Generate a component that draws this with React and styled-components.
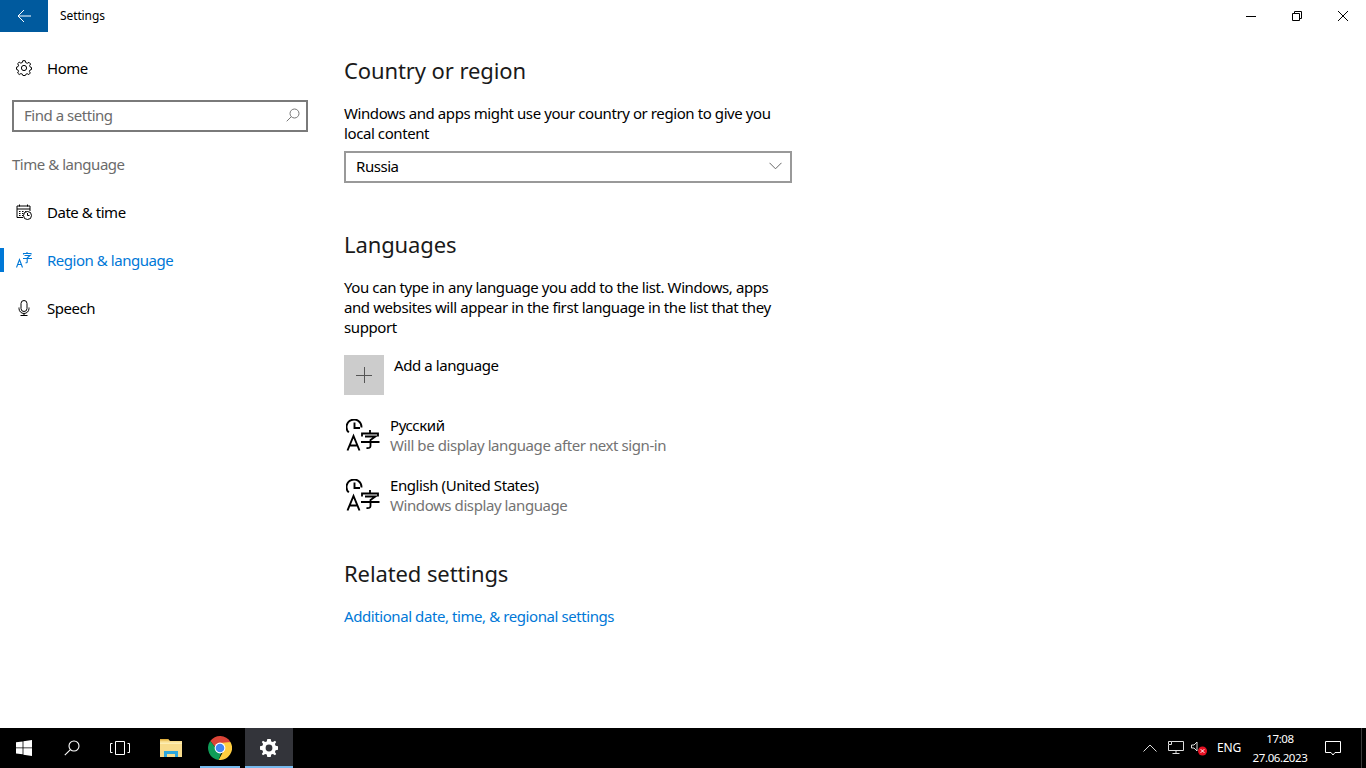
import React from "react";
import styled, { createGlobalStyle } from "styled-components";

const Global = createGlobalStyle`
  html, body { margin: 0; padding: 0; background: #fff; }
  * { box-sizing: border-box; }
  #root { width: 1366px; height: 768px; overflow: hidden; }
  body { font-family: "Noto Sans", "Open Sans", sans-serif; color: #000; }
`;

const Desktop = styled.div`
  width: 1366px; height: 768px; display: flex; flex-direction: column;
`;
const Window = styled.div`
  height: 728px; display: flex; flex-direction: column; background: #fff;
`;
const TitleBar = styled.div`
  height: 32px; display: flex; align-items: center; flex: none;
`;
const BackButton = styled.div`
  width: 48px; height: 32px; background: #005a9e; display: flex; align-items: center; justify-content: center; color: #fff;
`;
const AppTitle = styled.div`
  font-size: 12px; margin-left: 12px; flex: 1; letter-spacing: -0.1px; padding-bottom: 2px;
`;
const WinButton = styled.div`
  width: 46px; height: 32px; display: flex; align-items: center; justify-content: center;
`;
const Body = styled.div`
  flex: 1; display: flex;
`;
const Sidebar = styled.nav`
  width: 320px; flex: none; padding-top: 12px; display: flex; flex-direction: column;
`;
const NavRow = styled.div`
  position: relative; height: 48px; display: flex; align-items: center; padding-left: 16px; gap: 15px;
  font-size: 15px; letter-spacing: -0.47px; color: ${p => (p.$active ? "#0078d7" : "#000")};
  ${p => p.$active && `
    &::before { content: ""; position: absolute; left: 0; top: 12px; width: 4px; height: 24px; background: #0078d7; }
  `}
`;
const IconBox = styled.span`
  width: 16px; height: 16px; display: flex; flex: none;
`;
const SearchBox = styled.div`
  margin: 8px 12px 0; height: 32px; border: 2px solid #7a7a7a; display: flex; align-items: center; justify-content: space-between;
  padding: 0 6px 2px 10px; font-size: 15px; letter-spacing: -0.47px; color: #6b6b6b;
`;
const GroupLabel = styled.div`
  margin: 19px 0 11px 12px; height: 26px; line-height: 26px; font-size: 15px; letter-spacing: -0.47px; color: #6b6b6b;
`;
const Content = styled.main`
  flex: 1; padding: 20px 0 0 24px; display: flex; flex-direction: column; align-items: flex-start;
`;
const Heading = styled.h2`
  margin: ${p => p.$top || 0}px 0 0; font-weight: 400; font-size: 22px; line-height: 36px; letter-spacing: -0.1px; color: #1a1a1a;
`;
const Para = styled.p`
  margin: 15px 0 0; width: 448px; font-size: 15px; line-height: 20px; letter-spacing: -0.41px;
`;
const Dropdown = styled.div`
  margin-top: 8px; width: 448px; height: 32px; border: 2px solid #999; display: flex; align-items: center; justify-content: space-between;
  padding: 0 8px 2px 10px; font-size: 15px; letter-spacing: -0.45px;
`;
const AddRow = styled.div`
  margin-top: 18px; display: flex; gap: 10px; font-size: 15px; letter-spacing: -0.42px; line-height: 20px;
`;
const AddTile = styled.div`
  width: 40px; height: 40px; background: #ccc; display: flex; align-items: center; justify-content: center;
`;
const LangRow = styled.div`
  display: flex; gap: 10px; margin-top: 20px; padding-left: 2px; height: 40px; align-items: center;
`;
const LangText = styled.div`
  font-size: 15px; line-height: 20px; letter-spacing: -0.42px;
`;
const LangSub = styled.div`
  color: #737373;
`;
const Link = styled.a`
  margin-top: 15px; font-size: 15px; line-height: 20px; letter-spacing: -0.42px; color: #0078d7; text-decoration: none;
`;
const Taskbar = styled.footer`
  height: 40px; background: #000; display: flex; align-items: stretch; color: #fff; flex: none;
`;
const TaskButton = styled.div`
  position: relative; width: 48px; margin-left: ${p => p.$ml || 0}px; display: flex; align-items: center; justify-content: center;
  background: ${p => (p.$active ? "#33343a" : "transparent")};
  ${p => p.$open && `
    &::after { content: ""; position: absolute; left: ${p.$active ? 0 : 4}px; right: ${p.$active ? 0 : 4}px; bottom: 0; height: 2px; background: #76b9ed; }
  `}
`;
const Tray = styled.div`
  margin-left: auto; width: 230px; display: flex; align-items: stretch;
`;
const TrayIcon = styled.div`
  width: ${p => p.$w}px; display: flex; justify-content: center; align-items: center; flex: none;
`;
const Lang = styled.div`
  font-size: 12px; width: 34px; display: flex; align-items: center; justify-content: center; margin-left: 2px; letter-spacing: -0.2px; padding-bottom: 1px;
`;
const Clock = styled.div`
  width: 58px; margin-left: 5px; display: flex; flex-direction: column; align-items: center; justify-content: center; font-size: 11.5px; line-height: 19px; letter-spacing: -0.4px; white-space: nowrap;
`;
const ShowDesktop = styled.div`
  flex: 1; margin-left: 4px; border-left: 1px solid #3a3a3a;
`;

const S = { fill: "none", stroke: "currentColor", strokeWidth: 1 };

const LangGlyph = () => (
  <svg width="34" height="32" viewBox="0 0 34 32" fill="none" stroke="#000" strokeWidth="1.9">
    <path d="M2.8 13.4 A7.5 7.5 0 1 1 15.5 8.5" />
    <path d="M8.5 3.5 V9 H14" />
    <path d="M1.5 31.5 L7.5 17 L13.5 31.5 M3.6 26.5 H11.4" />
    <path d="M24 11 V14 M16 17.5 V14.5 H32 V17.5 M19 17.5 H29.5 L24.5 21 V27 Q24.5 29.5 20.5 29 M15 23 H33.5" strokeWidth="1.8" />
  </svg>
);

export default function App() {
  return (
    <Desktop>
      <Global />
      <Window>
        <TitleBar>
          <BackButton>
            <svg width="16" height="16" viewBox="0 0 16 16" fill="none" stroke="#fff" strokeWidth="1">
              <path d="M2 8 H15 M8 2 L2 8 L8 14" />
            </svg>
          </BackButton>
          <AppTitle>Settings</AppTitle>
          <WinButton>
            <svg width="10" height="10" viewBox="0 0 10 10"><path d="M0 5.5 H10" stroke="#000" /></svg>
          </WinButton>
          <WinButton>
            <svg width="10" height="10" viewBox="0 0 10 10" fill="none" stroke="#000"><path d="M0.5 2.5 H7.5 V9.5 H0.5 Z M2.5 2.5 V0.5 H9.5 V7.5 H7.5" /></svg>
          </WinButton>
          <WinButton>
            <svg width="10" height="10" viewBox="0 0 10 10" fill="none" stroke="#000"><path d="M0 0 L10 10 M10 0 L0 10" /></svg>
          </WinButton>
        </TitleBar>
        <Body>
          <Sidebar>
            <NavRow>
              <IconBox>
                <svg width="16" height="16" viewBox="0 0 16 16" {...S} color="#000">
                  <circle cx="8" cy="8" r="2.6" />
                  <path d="M6.8 .7 H9.2 L9.7 2.6 L11.3 3.3 L13 2.3 L14.6 4 L13.6 5.6 L14.3 7.2 L15.5 7.5 V9.5 L14 10 L13.4 11.4 L14.3 13 L12.8 14.6 L11.2 13.7 L9.8 14.3 L9.3 15.5 H6.9 L6.4 14.2 L4.9 13.6 L3.2 14.5 L1.6 13 L2.5 11.3 L1.9 9.9 L.5 9.4 V7.2 L2 6.7 L2.6 5.2 L1.6 3.7 L3.2 2.2 L4.8 3.1 L6.3 2.5 Z" />
                </svg>
              </IconBox>
              Home
            </NavRow>
            <SearchBox>
              Find a setting
              <svg width="14" height="14" viewBox="0 0 14 14" fill="none" stroke="#777"><circle cx="8.5" cy="5.5" r="4.5" /><path d="M5.3 8.7 L.7 13.3" /></svg>
            </SearchBox>
            <GroupLabel>Time &amp; language</GroupLabel>
            <NavRow>
              <IconBox>
                <svg width="16" height="16" viewBox="0 0 16 16" {...S} color="#000">
                  <path d="M7 13.5 H1 V2 H14 V7" />
                  <path d="M1 5 H14 M3.5 .5 V2.5 M11.5 .5 V2.5" />
                  <path d="M3 7.5 H4.5 M6 7.5 H7.5 M9 7.5 H10.5 M3 9.5 H4.5 M6 9.5 H7.5 M3 11.5 H4.5 M6 11.5 H7.5" strokeWidth="1.2" />
                  <circle cx="11.5" cy="11.5" r="4" fill="#fff" />
                  <path d="M11.5 9 V11.5 H13.5" />
                </svg>
              </IconBox>
              Date &amp; time
            </NavRow>
            <NavRow $active>
              <IconBox>
                <svg width="16" height="16" viewBox="0 0 16 16" fill="none" stroke="#0078d7" strokeWidth="1.1">
                  <path d="M.5 15.5 L3.5 7.5 L6.5 15.5 M1.7 12.5 H5.3" />
                  <path d="M7.5 2.5 V1.5 H15 V2.5 M11 0 V1.5 M8.5 3.5 H14 L11.2 6 V10 Q11.2 11 9.5 10.7 M7 6.5 H16" />
                </svg>
              </IconBox>
              Region &amp; language
            </NavRow>
            <NavRow>
              <IconBox>
                <svg width="16" height="16" viewBox="0 0 16 16" fill="none" stroke="#000" strokeWidth="1">
                  <rect x="5" y="0.5" width="6" height="11" rx="3" />
                  <path d="M3 7.5 V8.5 A5 5 0 0 0 13 8.5 V7.5 M8 13.5 V15.5 M4.5 15.5 H11.5" />
                </svg>
              </IconBox>
              Speech
            </NavRow>
          </Sidebar>
          <Content>
            <Heading>Country or region</Heading>
            <Para>Windows and apps might use your country or region to give you local content</Para>
            <Dropdown>
              Russia
              <svg width="13" height="8" viewBox="0 0 13 8" fill="none" stroke="#666"><path d="M.5 .8 L6.5 6.8 L12.5 .8" /></svg>
            </Dropdown>
            <Heading $top={43}>Languages</Heading>
            <Para>You can type in any language you add to the list. Windows, apps and websites will appear in the first language in the list that they support</Para>
            <AddRow>
              <AddTile>
                <svg width="16" height="16" viewBox="0 0 16 16" fill="none" stroke="#555"><path d="M0 8.5 H16 M8.5 0 V16" /></svg>
              </AddTile>
              Add a language
            </AddRow>
            <LangRow>
              <LangGlyph />
              <LangText>Русский<LangSub>Will be display language after next sign-in</LangSub></LangText>
            </LangRow>
            <LangRow>
              <LangGlyph />
              <LangText>English (United States)<LangSub>Windows display language</LangSub></LangText>
            </LangRow>
            <Heading $top={40}>Related settings</Heading>
            <Link>Additional date, time, &amp; regional settings</Link>
          </Content>
        </Body>
      </Window>
      <Taskbar>
        <TaskButton>
          <svg width="16" height="16" viewBox="0 0 16 16" fill="#fff"><path d="M0 2.3 L6.6 1.4 V7.4 H0 Z M7.4 1.3 L16 0 V7.4 H7.4 Z M0 8.2 H6.6 V14.3 L0 13.4 Z M7.4 8.2 H16 V16 L7.4 14.7 Z" /></svg>
        </TaskButton>
        <TaskButton>
          <svg width="16" height="16" viewBox="0 0 16 16" fill="none" stroke="#fff" strokeWidth="1.1"><circle cx="10" cy="6" r="5" /><path d="M6.4 9.6 L.8 15.2" /></svg>
        </TaskButton>
        <TaskButton>
          <svg width="20" height="14" viewBox="0 0 20 14" fill="none" stroke="#fff"><path d="M5.5 .5 H14.5 V13.5 H5.5 Z M2.5 2.5 H.5 V11.5 H2.5 M17.5 2.5 H19.5 V11.5 H17.5" /></svg>
        </TaskButton>
        <TaskButton $ml={3}>
          <svg width="22" height="18" viewBox="0 0 22 18">
            <path d="M0 0 H8 L10 2 H22 V18 H0 Z" fill="#f8dc8c" />
            <path d="M0 0 H8 L9 1.5 H0 Z" fill="#e0b040" />
            <path d="M0 3.5 H22 V5 H0 Z" fill="#fdeeb4" />
            <path d="M4 18 V12 H18 V18 H15 V15 H7 V18 Z" fill="#2ea8de" />
          </svg>
        </TaskButton>
        <TaskButton $open $ml={1}>
          <svg width="24" height="24" viewBox="0 0 24 24">
            <path d="M12 12 L22.4 6 A12 12 0 0 0 2.2 5.1 L7.8 12 Z" fill="#db4437" />
            <path d="M2.2 5.1 A12 12 0 0 0 10.6 23.9 L13.9 15 L7.8 12 Z" fill="#0f9d58" />
            <path d="M22.4 6 A12 12 0 0 1 10.6 23.9 L16 14 L12 7 Z" fill="#ffcd40" />
            <circle cx="12" cy="12" r="5.4" fill="#fff" />
            <circle cx="12" cy="12" r="4.3" fill="#4285f4" />
          </svg>
        </TaskButton>
        <TaskButton $open $active $ml={1}>
          <svg width="18" height="18" viewBox="0 0 18 18">
            <path fillRule="evenodd" fill="#fff" d="M7.3 0 H10.7 L11.2 2.4 L12.9 3.1 L15 1.8 L16.2 3 L14.9 5.1 L15.6 6.8 L18 7.3 V10.7 L15.6 11.2 L14.9 12.9 L16.2 15 L15 16.2 L12.9 14.9 L11.2 15.6 L10.7 18 H7.3 L6.8 15.6 L5.1 14.9 L3 16.2 L1.8 15 L3.1 12.9 L2.4 11.2 L0 10.7 V7.3 L2.4 6.8 L3.1 5.1 L1.8 3 L3 1.8 L5.1 3.1 L6.8 2.4 Z M9 5.6 A3.4 3.4 0 1 0 9 12.4 A3.4 3.4 0 1 0 9 5.6 Z" />
          </svg>
        </TaskButton>
        <Tray>
          <TrayIcon $w={28}>
            <svg width="14" height="8" viewBox="0 0 14 8" fill="none" stroke="#ddd"><path d="M.5 7.5 L7 1 L13.5 7.5" /></svg>
          </TrayIcon>
          <TrayIcon $w={23}>
            <svg width="16" height="14" viewBox="0 0 16 14" fill="none" stroke="#ddd"><path d="M3.5 .5 H15.5 V9.5 H.5 V4 M.5 .5 H3.5 V3.5 H.5 Z M8 9.5 V12.5 M4.5 12.5 H11.5" /></svg>
          </TrayIcon>
          <TrayIcon $w={23}>
            <svg width="16" height="16" viewBox="0 0 16 16">
              <path d="M.5 5 H3 L6 2 V11 L3 8 H.5 Z" fill="none" stroke="#ddd" />
              <circle cx="11.5" cy="11" r="4.5" fill="#e81123" />
              <path d="M9.7 9.2 L13.3 12.8 M13.3 9.2 L9.7 12.8" stroke="#fff" />
            </svg>
          </TrayIcon>
          <Lang>ENG</Lang>
          <Clock><span>17:08</span><span>27.06.2023</span></Clock>
          <TrayIcon $w={48}>
            <svg width="16" height="15" viewBox="0 0 16 15" fill="none" stroke="#fff"><path d="M.5 .5 H15.5 V11.5 H10 L8 14 L6 11.5 H.5 Z" /></svg>
          </TrayIcon>
          <ShowDesktop />
        </Tray>
      </Taskbar>
    </Desktop>
  );
}
